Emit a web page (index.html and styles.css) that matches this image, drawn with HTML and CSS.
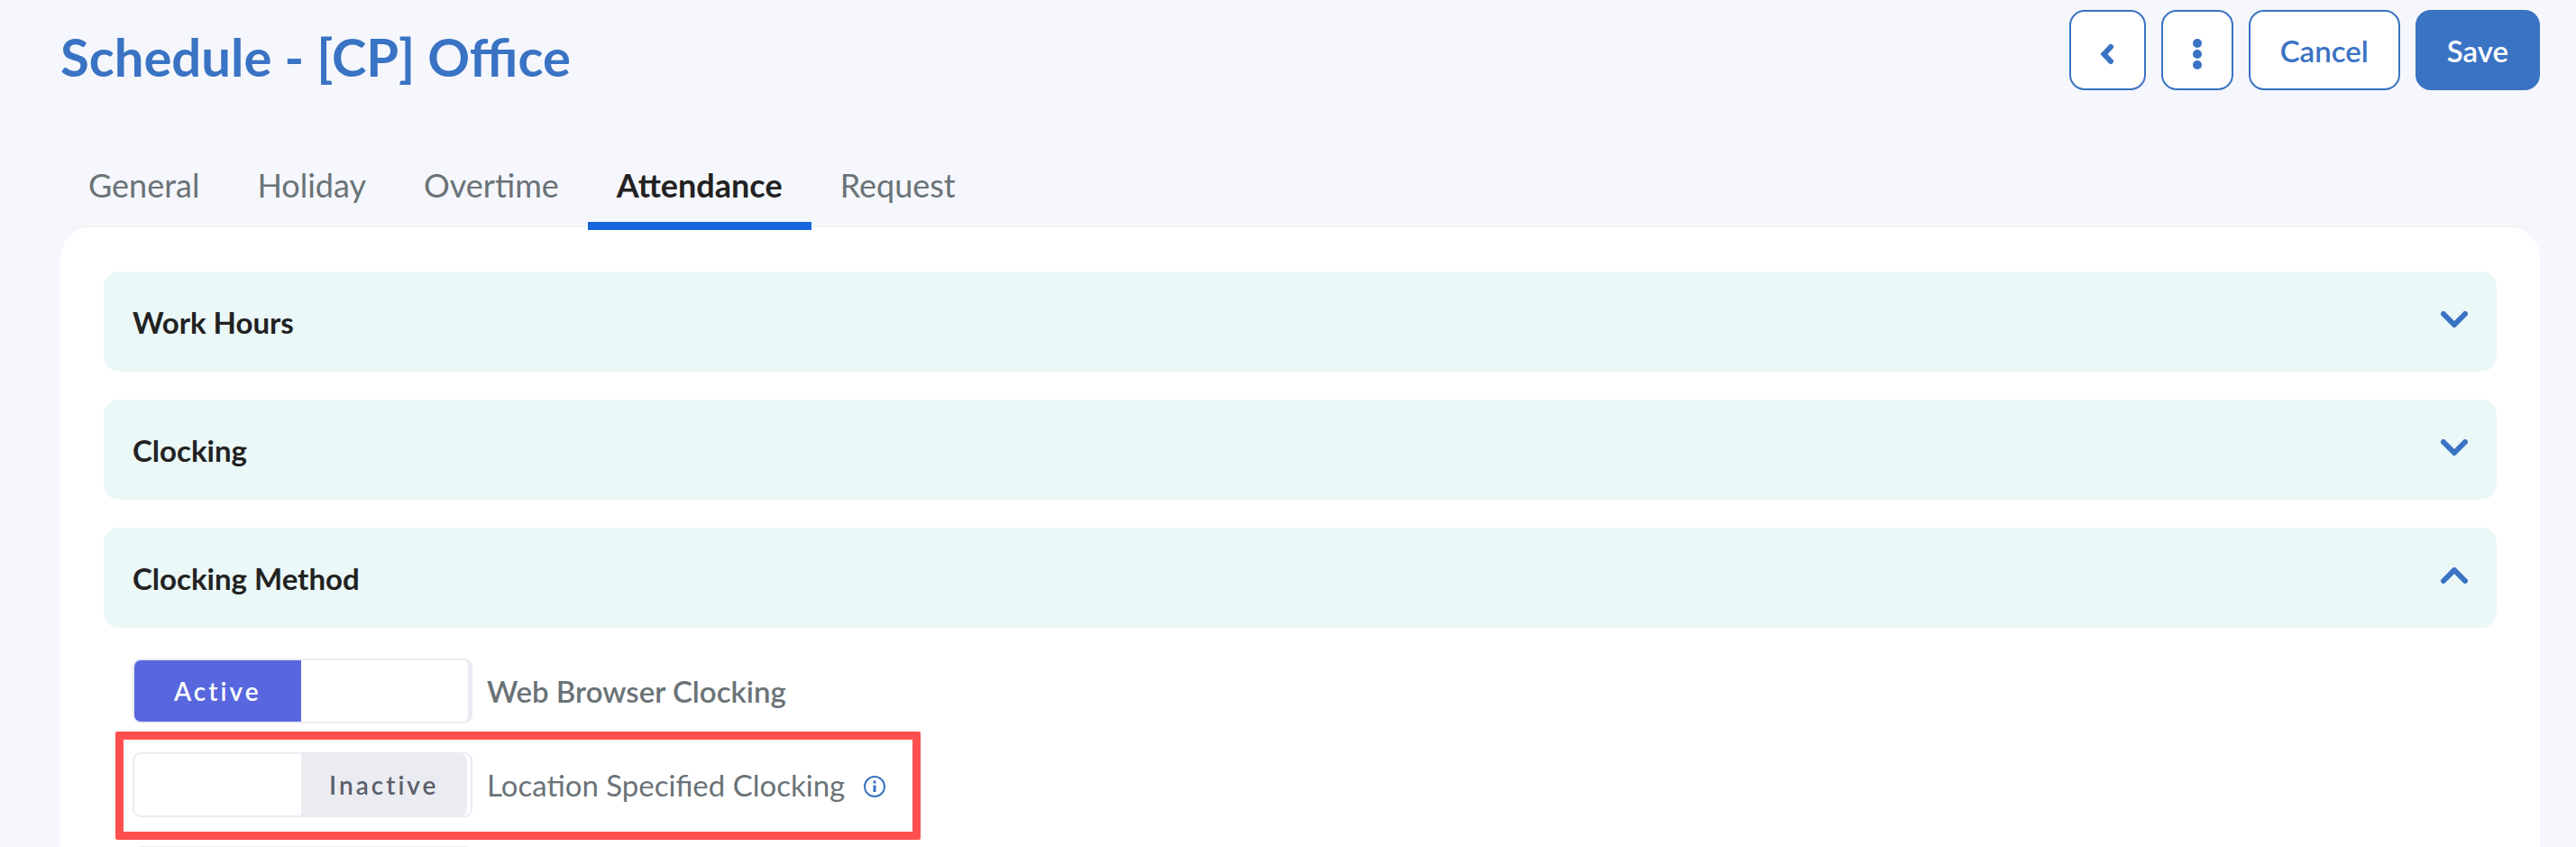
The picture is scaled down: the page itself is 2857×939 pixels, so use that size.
FILE: index.html
```html
<!DOCTYPE html>
<html lang="en">
<head>
<meta charset="utf-8">
<title>Schedule - [CP] Office</title>
<link rel="stylesheet" href="styles.css">
</head>
<body>
<div class="page">
  <header class="page-header">
    <h1 class="page-title">Schedule - [CP] Office</h1>
    <div class="actions">
      <button class="btn btn-back" type="button" aria-label="Back">
        <svg class="icon-back" viewBox="0 0 16 24" aria-hidden="true"><path d="M12 4L4.500 12l7.500 8"/></svg>
      </button>
      <button class="btn btn-more" type="button" aria-label="More options">
        <svg class="icon-more" viewBox="0 0 10 36" aria-hidden="true"><circle cx="5" cy="6" r="5"/><circle cx="5" cy="18" r="5"/><circle cx="5" cy="30" r="5"/></svg>
      </button>
      <button class="btn" type="button">Cancel</button>
      <button class="btn btn-primary" type="button">Save</button>
    </div>
  </header>

  <nav class="tabs" aria-label="Schedule sections">
    <a class="tab" href="#general">General</a>
    <a class="tab" href="#holiday">Holiday</a>
    <a class="tab" href="#overtime">Overtime</a>
    <a class="tab tab-active" href="#attendance" aria-current="page">Attendance</a>
    <a class="tab" href="#request">Request</a>
  </nav>

  <main class="panel">
    <button class="accordion" type="button" aria-expanded="false">
      <span>Work Hours</span>
      <svg class="chevron" viewBox="0 0 30 18" aria-hidden="true"><path d="M3 3l12 12L27 3"/></svg>
    </button>
    <button class="accordion" type="button" aria-expanded="false">
      <span>Clocking</span>
      <svg class="chevron" viewBox="0 0 30 18" aria-hidden="true"><path d="M3 3l12 12L27 3"/></svg>
    </button>
    <button class="accordion" type="button" aria-expanded="true">
      <span>Clocking Method</span>
      <svg class="chevron" viewBox="0 0 30 18" aria-hidden="true"><path d="M3 15L15 3l12 12"/></svg>
    </button>

    <div class="methods">
      <div class="method">
        <label class="method-label method-on">
          <input class="switch-input" type="checkbox" checked>
          <span class="switch switch-on"><span class="switch-half switch-active">Active</span></span>
          <span>Web Browser Clocking</span>
        </label>
      </div>
      <div class="method method-marked">
        <label class="method-label">
          <input class="switch-input" type="checkbox">
          <span class="switch switch-off"><span class="switch-half switch-inactive">Inactive</span></span>
          <span>Location Specified Clocking</span>
        </label>
        <svg class="icon-info" viewBox="0 0 26 26" role="img" aria-label="Information"><circle class="info-ring" cx="13" cy="13" r="11"/><path d="M11.500 6.500h3v3h-3zM11.500 11.500h3v7.500h-3z"/></svg>
      </div>
      <div class="method">
        <span class="switch"></span>
      </div>
    </div>
  </main>
</div>
</body>
</html>
```

FILE: styles.css
```css
* {
  box-sizing: border-box;
}

body {
  margin: 0;
  background: #f5f7fc;
  color: #222;
  font-family: Lato, "Open Sans", sans-serif;
  font-size: 33px;
  line-height: 40px;
}

button {
  font: inherit;
  color: inherit;
  cursor: pointer;
}

.page {
  display: flex;
  flex-direction: column;
  height: 100vh;
  overflow: hidden;
}

.page-header {
  display: flex;
  justify-content: space-between;
  align-items: flex-start;
  padding: 11px 40px 0 67px;
}

.page-title {
  margin: 0;
  padding-top: 20px;
  color: #3a73c3;
  font-size: 58px;
  font-weight: 700;
  line-height: 64px;
}

.actions {
  display: flex;
  gap: 17px;
}

.btn {
  display: flex;
  align-items: center;
  justify-content: center;
  height: 89px;
  padding: 0 33px;
  border: 2px solid #3a73c3;
  border-radius: 17px;
  background: #fff;
  color: #3a73c3;
  font-weight: 600;
}

.btn-back {
  width: 85px;
  padding: 8px 0 0;
}

.btn-more {
  width: 80px;
  padding: 8px 0 0;
}

.btn-primary {
  background: #3a73c3;
  color: #fff;
}

.icon-back {
  width: 16px;
  height: 24px;
  fill: none;
  stroke: #3a73c3;
  stroke-width: 6;
  stroke-linecap: round;
}

.icon-more {
  width: 10px;
  height: 36px;
  fill: #3a73c3;
}

.tabs {
  display: flex;
  margin: 73px 0 -3px 18px;
  padding-left: 48px;
  background: linear-gradient(#f1f3f4, #f1f3f4) 0 77px / 100% 2px no-repeat;
  position: relative;
  z-index: 1;
}

.tab {
  padding: 12px 32px 21px;
  border-bottom: 9px solid transparent;
  color: #6a7377;
  font-size: 36px;
  text-decoration: none;
}

.tab-active {
  border-bottom-color: #1766dc;
  color: #222;
  font-weight: 700;
}

.panel {
  flex: 1;
  display: flex;
  flex-direction: column;
  gap: 31px;
  min-height: 0;
  margin: 0 40px 0 67px;
  padding: 49px 48px 0;
  border-radius: 34px 34px 0 0;
  background: #fff;
}

.accordion {
  flex: none;
  display: flex;
  align-items: center;
  justify-content: space-between;
  height: 111px;
  padding: 0 32px;
  border: 0;
  border-radius: 17px;
  background: #eaf8f8;
  font-weight: 700;
}

.chevron {
  width: 30px;
  height: 18px;
  margin-bottom: 6px;
  fill: none;
  stroke: #3a73c3;
  stroke-width: 6;
  stroke-linecap: round;
}

.methods {
  display: grid;
  gap: 32px;
  padding: 3px 32px 0;
}

.method {
  justify-self: start;
  display: flex;
  align-items: center;
  gap: 20px;
  position: relative;
  height: 72px;
}

.method-marked::after {
  content: "";
  position: absolute;
  inset: -23px -38px -25px -19px;
  border: 9px solid #ff4f4f;
  border-radius: 2px;
  pointer-events: none;
}

.method-label {
  display: flex;
  align-items: center;
  gap: 16px;
  color: #6a7377;
}

.method-on {
  font-weight: 600;
}

.switch-input {
  position: absolute;
  width: 377px;
  height: 72px;
  margin: 0;
  opacity: 0;
}

.switch {
  display: flex;
  width: 377px;
  height: 72px;
  padding-right: 4px;
  border: 2px solid #ebecf2;
  border-radius: 9px;
}

.switch-on {
  padding-right: 1px;
  border-right-width: 5px;
}

.switch-half {
  display: flex;
  align-items: center;
  justify-content: center;
  width: 50%;
  font-size: 28px;
  font-weight: 600;
  letter-spacing: 3px;
}

.switch-off {
  justify-content: flex-end;
}

.switch-active {
  border-radius: 7px 0 0 7px;
  background: #5867dd;
  color: #fff;
}

.switch-inactive {
  border-radius: 0 7px 7px 0;
  background: #ebecf2;
  color: #5b5f69;
}

.icon-info {
  width: 26px;
  height: 26px;
  margin-top: 4px;
  fill: #3a73c3;
}

.info-ring {
  fill: none;
  stroke: #3a73c3;
  stroke-width: 2;
}
```
